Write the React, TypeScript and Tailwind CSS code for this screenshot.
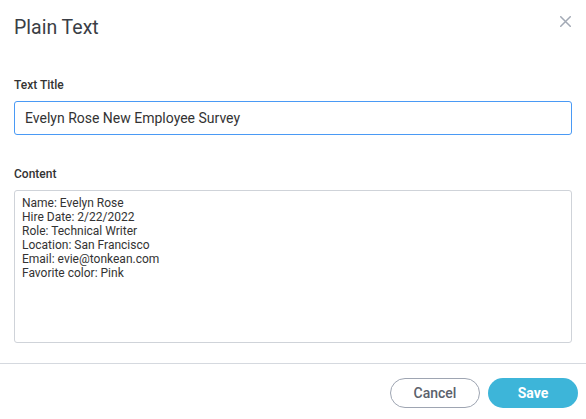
import React from "react";

export default function App() {
  const lines = [
    "Name: Evelyn Rose",
    "Hire Date: 2/22/2022",
    "Role: Technical Writer",
    "Location: San Francisco",
    "Email: evie@tonkean.com",
    "Favorite color: Pink",
  ];
  return (
    <div className="w-[586px] h-[419px] bg-white font-['Roboto',sans-serif] flex flex-col">
      <div className="flex items-start justify-between pl-[14px] pr-[15px] pt-[16px]">
        <h1 className="text-[19.5px] leading-[24px] text-[#3a3e45] font-normal">Plain Text</h1>
        <button className="mt-[0px] w-[11px] h-[11px] flex items-center justify-center" aria-label="Close">
          <svg width="11" height="11" viewBox="0 0 11 11">
            <path d="M0.75 0.75 L10.25 10.25 M10.25 0.75 L0.75 10.25" stroke="#a2a9b5" strokeWidth="1.5" strokeLinecap="round" />
          </svg>
        </button>
      </div>
      <div className="px-[14px] pt-[38px] flex flex-col">
        <label className="text-[12px] leading-[14px] font-medium text-[#333]">Text Title</label>
        <div className="mt-[9px] h-[34px] border border-[#4a9af5] rounded-[3px] flex items-center px-[10px]">
          <span className="text-[14px] text-[#333]">Evelyn Rose New Employee Survey</span>
        </div>
        <label className="mt-[32px] text-[12px] leading-[14px] font-medium text-[#333]">Content</label>
        <div className="mt-[9px] h-[153px] border border-[#cfd3d9] rounded-[3px] px-[7px] pt-[5px]">
          {lines.map((l) => (
            <div key={l} className="text-[12px] leading-[14px] text-[#333]">{l}</div>
          ))}
        </div>
      </div>
      <div className="mt-[20px] border-t border-[#d5d9df]" />
      <div className="flex justify-end gap-[8px] pr-[8px] pt-[14px]">
        <button className="w-[90px] h-[30px] rounded-full border border-[#9ea5b2] text-[14px] font-medium text-[#5b616c] bg-white">Cancel</button>
        <button className="w-[90px] h-[30px] rounded-full bg-[#3db5d9] text-[14px] font-bold text-white">Save</button>
      </div>
    </div>
  );
}
